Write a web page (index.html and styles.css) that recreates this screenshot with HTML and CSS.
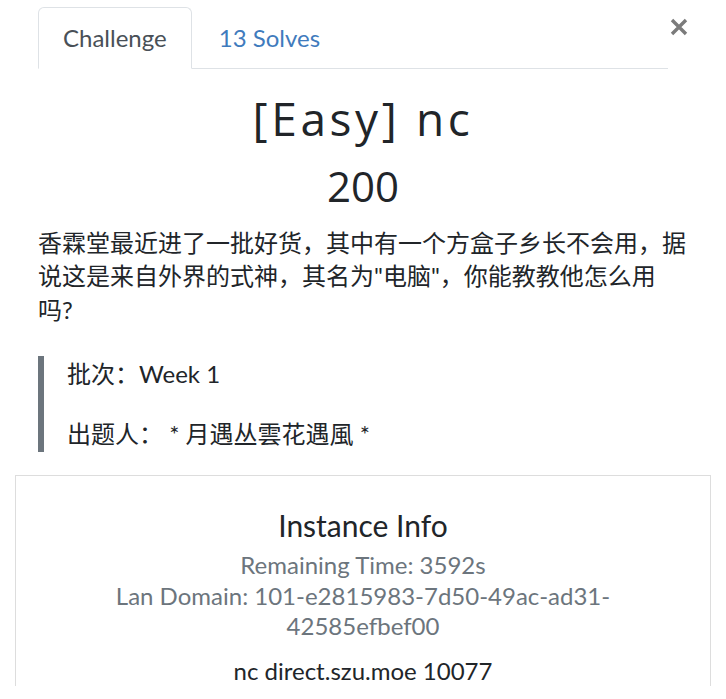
FILE: index.html
```html
<!DOCTYPE html>
<html lang="zh">
<head>
<meta charset="utf-8">
<title>Challenge</title>
<link rel="stylesheet" href="styles.css">
</head>
<body>
<div class="modal">
  <div class="tabs-row">
    <ul class="nav">
      <li class="tab active">Challenge</li>
      <li class="tab link">13 Solves</li>
    </ul>
    <button class="close" aria-label="Close">
      <svg width="18" height="18" viewBox="0 0 18 18"><path d="M2 2L16 16M16 2L2 16" stroke="#7b7b7b" stroke-width="3.4" stroke-linecap="butt"/></svg>
    </button>
  </div>
  <div class="content">
    <h2 class="name">[Easy] nc</h2>
    <h3 class="value">200</h3>
    <p class="desc">香霖堂最近进了一批好货，其中有一个方盒子乡长不会用，据说这是来自外界的式神，其名为"电脑"，你能教教他怎么用吗?</p>
    <blockquote class="quote">
      <p>批次：Week 1</p>
      <p>出题人： * 月遇丛雲花遇風 *</p>
    </blockquote>
  </div>
  <div class="instance">
    <h4 class="inst-title">Instance Info</h4>
    <div class="muted">Remaining Time: 3592s</div>
    <div class="muted">Lan Domain: 101-e2815983-7d50-49ac-ad31-42585efbef00</div>
    <p class="conn">nc direct.szu.moe 10077</p>
  </div>
</div>
</body>
</html>
```

FILE: styles.css
```css
html, body {
  margin: 0;
  background: #fff;
}
body {
  font-family: Lato, "Noto Sans CJK SC", sans-serif;
  color: #212529;
  font-size: 24px;
  line-height: 1.5;
}
.modal {
  padding: 7px 15px 0;
}
.tabs-row {
  display: flex;
  align-items: flex-start;
  margin-left: 23px;
}
.nav {
  list-style: none;
  margin: 0;
  padding: 0;
  display: flex;
  flex: 1;
  border-bottom: 1px solid #dee2e6;
}
.tab {
  padding: 12px 24px;
  border: 1px solid transparent;
  border-top-left-radius: 6px;
  border-top-right-radius: 6px;
  margin-bottom: -1px;
}
.tab.active {
  color: #495057;
  border-color: #dee2e6 #dee2e6 #fff;
  background: #fff;
}
.tab.link {
  color: #3f7bbd;
  padding-left: 26px;
}
.close {
  width: 43px;
  background: none;
  border: 0;
  padding: 0 0 0 2px;
  margin-top: 11px;
  display: flex;
  justify-content: flex-start;
}
.close svg {
  display: block;
}
.content {
  padding: 0 23px;
}
.name {
  font-family: "Open Sans", sans-serif;
  font-weight: 400;
  font-size: 46px;
  letter-spacing: 3.6px;
  line-height: 1.2;
  text-align: center;
  margin: 22px 0 0;
}
.value {
  font-family: "Open Sans", sans-serif;
  font-weight: 400;
  font-size: 42px;
  line-height: 1.2;
  text-align: center;
  margin: 15px 0 0;
}
.desc {
  margin: 14px 0 0;
  line-height: 33.5px;
}
.quote {
  margin: 30px 0 0;
  padding: 0 0 0 23px;
  border-left: 6px solid #6c757d;
}
.quote p {
  margin: 0 0 24px;
  line-height: 36px;
}
.quote p:last-child {
  margin-bottom: 0;
}
.instance {
  margin-top: 23px;
  border: 1px solid #dddddd;
  border-bottom: 0;
  text-align: center;
  padding: 31px 87px 0;
}
.inst-title {
  font-weight: 400;
  font-size: 30px;
  line-height: 1.2;
  margin: 0 0 7px;
}
.muted {
  color: #6c757d;
  font-size: 24px;
  line-height: 30.5px;
}
.conn {
  margin: 13px 0 0;
  font-size: 24px;
  line-height: 31px;
}
```
